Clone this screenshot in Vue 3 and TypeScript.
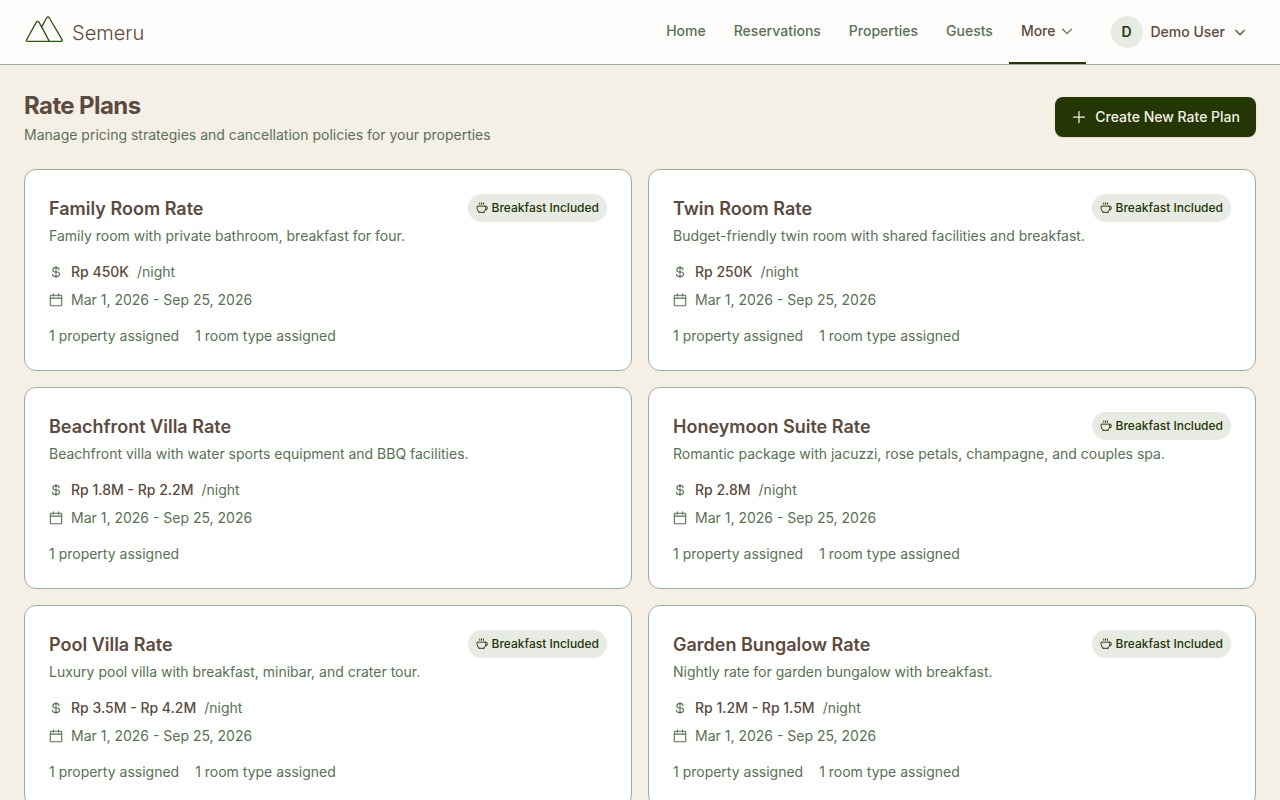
<script setup lang="ts">
interface RatePlan {
  name: string
  description: string
  price: string
  dates: string
  breakfast: boolean
  assigned: string[]
}

const links: string[] = ['Home', 'Reservations', 'Properties', 'Guests']
const dates = 'Mar 1, 2026 - Sep 25, 2026'
const property = '1 property assigned'
const room = '1 room type assigned'

const plans: RatePlan[] = [
  { name: 'Family Room Rate', description: 'Family room with private bathroom, breakfast for four.', price: 'Rp 450K', dates, breakfast: true, assigned: [property, room] },
  { name: 'Twin Room Rate', description: 'Budget-friendly twin room with shared facilities and breakfast.', price: 'Rp 250K', dates, breakfast: true, assigned: [property, room] },
  { name: 'Beachfront Villa Rate', description: 'Beachfront villa with water sports equipment and BBQ facilities.', price: 'Rp 1.8M - Rp 2.2M', dates, breakfast: false, assigned: [property] },
  { name: 'Honeymoon Suite Rate', description: 'Romantic package with jacuzzi, rose petals, champagne, and couples spa.', price: 'Rp 2.8M', dates, breakfast: true, assigned: [property, room] },
  { name: 'Pool Villa Rate', description: 'Luxury pool villa with breakfast, minibar, and crater tour.', price: 'Rp 3.5M - Rp 4.2M', dates, breakfast: true, assigned: [property, room] },
  { name: 'Garden Bungalow Rate', description: 'Nightly rate for garden bungalow with breakfast.', price: 'Rp 1.2M - Rp 1.5M', dates, breakfast: true, assigned: [property, room] },
]
</script>

<template>
  <div class="page">
    <header class="topbar">
      <a class="brand" href="#">
        <svg class="logo" viewBox="0 2 40 28" aria-hidden="true">
          <path d="M36.8 28.4 H3.6 Q1.7 28.4 2.6 26.7 L12.2 9.4 Q13.6 7.2 15.1 9.4 L25.4 28.4 M36.8 28.4 Q39 28.4 38 26.6 L25.4 5 Q23.9 2.9 22.6 5 L18 13.4" />
        </svg>
        <span>Semeru</span>
      </a>
      <nav class="nav" aria-label="Main">
        <a v-for="link in links" :key="link" class="nav-item" href="#">{{ link }}</a>
        <button class="nav-item active" type="button">
          More
          <svg class="chevron" viewBox="0 0 256 256" aria-hidden="true"><path d="M208 96 L128 176 L48 96" /></svg>
        </button>
      </nav>
      <button class="user" type="button">
        <span class="avatar">D</span>
        <span>Demo User</span>
        <svg class="chevron bold" viewBox="0 0 256 256" aria-hidden="true"><path d="M208 96 L128 176 L48 96" /></svg>
      </button>
    </header>

    <main class="content">
      <div class="heading">
        <div>
          <h1>Rate Plans</h1>
          <p>Manage pricing strategies and cancellation policies for your properties</p>
        </div>
        <button class="create" type="button">
          <svg viewBox="0 0 256 256" aria-hidden="true"><path d="M40 128 H216 M128 40 V216" /></svg>
          Create New Rate Plan
        </button>
      </div>

      <div class="grid">
        <article v-for="plan in plans" :key="plan.name" class="card">
          <div class="card-top">
            <h2>{{ plan.name }}</h2>
            <span v-if="plan.breakfast" class="badge">
              <svg viewBox="0 0 256 256" aria-hidden="true">
                <path d="M80 20 V48 M120 20 V48 M160 20 V48 M64 220 H176 M76 220 A88 88 0 0 1 24 136 V88 H208 V136 A88 88 0 0 1 160 220 M208 88 A36 36 0 0 1 244 124 A36 36 0 0 1 204 164" />
              </svg>
              Breakfast Included
            </span>
          </div>
          <p class="description">{{ plan.description }}</p>
          <div class="details">
            <div class="row">
              <svg viewBox="0 0 256 256" aria-hidden="true">
                <path d="M128 24 V232 M184 88 A40 40 0 0 0 144 48 H112 A40 40 0 0 0 112 128 H152 A40 40 0 0 1 152 208 H104 A40 40 0 0 1 64 168" />
              </svg>
              <strong>{{ plan.price }}</strong>
              <span>/night</span>
            </div>
            <div class="row">
              <svg viewBox="0 0 256 256" aria-hidden="true">
                <rect x="24" y="40" width="208" height="192" rx="14" />
                <path d="M176 16 V60 M80 16 V60 M24 94 H232" />
              </svg>
              <span>{{ plan.dates }}</span>
            </div>
          </div>
          <div class="assigned">
            <span v-for="item in plan.assigned" :key="item">{{ item }}</span>
          </div>
        </article>
      </div>
    </main>
  </div>
</template>

<style>
body {
  margin: 0;
  background: #f5f0e6;
}
</style>

<style scoped>
.page {
  min-height: 100vh;
  background: #f5f0e6;
  color: #5a6f57;
  font-family: Inter, "Liberation Sans", sans-serif;
  font-size: 14px;
  line-height: 20px;
}

h1,
h2,
p {
  margin: 0;
}

button {
  border: 0;
  background: none;
  font: inherit;
  color: inherit;
  cursor: pointer;
}

a {
  color: inherit;
  text-decoration: none;
}

svg {
  flex: none;
  fill: none;
  stroke: currentColor;
  stroke-width: 20;
  stroke-linecap: round;
  stroke-linejoin: round;
}

.topbar {
  display: flex;
  align-items: center;
  height: 64px;
  padding: 0 24px;
  background: #fefdfb;
  border-bottom: 1px solid #9caf94;
}

.brand {
  display: flex;
  align-items: flex-end;
  gap: 8px;
  margin-right: auto;
  padding-bottom: 6px;
  color: #5c4a3f;
  font-size: 20px;
  font-weight: 300;
  line-height: 20px;
}

.logo {
  width: 40px;
  height: 28px;
  color: #2d5016;
  stroke-width: 1.3;
}

.nav {
  display: flex;
  align-self: stretch;
  gap: 4px;
  margin-right: 16px;
}

.nav-item {
  display: flex;
  align-items: center;
  gap: 4px;
  padding: 0 12px;
  border-bottom: 2px solid transparent;
  font-weight: 500;
}

.active {
  border-bottom-color: #233604;
  color: #5c4a3f;
}

.chevron {
  width: 14px;
  height: 14px;
  color: #5a6f57;
  stroke-width: 22;
}

.chevron.bold {
  stroke-width: 28;
}

.user {
  display: flex;
  align-items: center;
  gap: 8px;
  padding: 8px 9px;
  color: #5c4a3f;
  font-weight: 500;
}

.avatar {
  display: grid;
  place-items: center;
  width: 32px;
  height: 32px;
  border-radius: 50%;
  background: #e8eae4;
  color: #233604;
  font-weight: 600;
}

.content {
  padding: 24px;
}

.heading {
  display: flex;
  align-items: center;
  justify-content: space-between;
  gap: 16px;
  margin-bottom: 24px;
}

h1 {
  margin-bottom: 2px;
  color: #5c4a3f;
  font-size: 24px;
  font-weight: 700;
  line-height: 34px;
  letter-spacing: -0.025em;
}

.create {
  display: flex;
  align-items: center;
  gap: 8px;
  height: 40px;
  padding: 0 16px;
  border-radius: 8px;
  background: #233604;
  color: #f5f0e6;
  font-weight: 500;
  box-shadow: 0 1px 2px rgba(0, 0, 0, 0.1);
}

.create svg {
  width: 16px;
  height: 16px;
}

.grid {
  display: grid;
  grid-template-columns: repeat(2, minmax(0, 1fr));
  gap: 16px;
}

.card {
  padding: 24px;
  border: 1px solid #9caf94;
  border-radius: 12px;
  background: #ffffff;
}

.card-top {
  display: flex;
  align-items: flex-start;
  justify-content: space-between;
  gap: 8px;
  margin-bottom: 2px;
}

h2 {
  color: #5c4a3f;
  font-size: 18px;
  font-weight: 600;
  line-height: 30px;
}

.badge {
  display: flex;
  align-items: center;
  gap: 4px;
  padding: 4px 8px;
  border-radius: 14px;
  background: #e8eae4;
  color: #233604;
  font-size: 12px;
  font-weight: 500;
}

.badge svg {
  width: 12px;
  height: 12px;
}

.details {
  display: grid;
  gap: 8px;
  margin: 16px 0;
}

.row {
  display: flex;
  align-items: center;
  gap: 8px;
}

.row svg {
  width: 14px;
  height: 14px;
}

.row strong {
  color: #5c4a3f;
  font-weight: 500;
}

.assigned {
  display: flex;
  gap: 16px;
}
</style>
